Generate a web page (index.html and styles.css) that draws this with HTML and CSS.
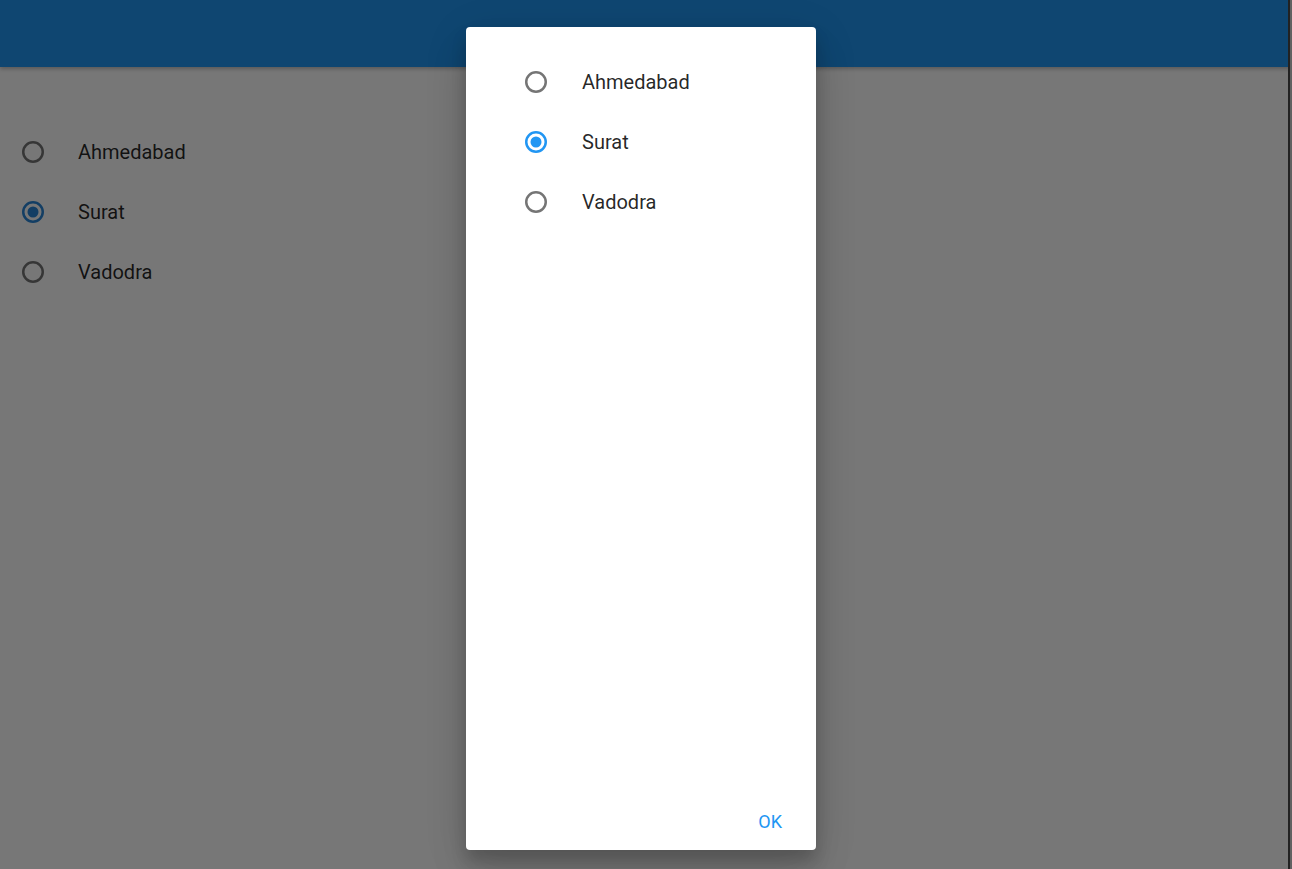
FILE: index.html
```html
<!DOCTYPE html>
<html>
<head>
<meta charset="utf-8">
<link rel="stylesheet" href="styles.css">
</head>
<body>
<div class="app">
  <header class="appbar"></header>
  <main class="list">
    <div class="row">
      <svg class="radio" viewBox="0 0 24 24"><circle cx="12" cy="12" r="9.75" fill="none" stroke="#757575" stroke-width="2.5"/></svg>
      <span class="label">Ahmedabad</span>
    </div>
    <div class="row">
      <svg class="radio" viewBox="0 0 24 24"><circle cx="12" cy="12" r="9.75" fill="none" stroke="#2a86d6" stroke-width="2.5"/><circle cx="12" cy="12" r="5.5" fill="#2a86d6"/></svg>
      <span class="label">Surat</span>
    </div>
    <div class="row">
      <svg class="radio" viewBox="0 0 24 24"><circle cx="12" cy="12" r="9.75" fill="none" stroke="#757575" stroke-width="2.5"/></svg>
      <span class="label">Vadodra</span>
    </div>
  </main>
  <div class="edge"></div>
  <div class="scrim"></div>
  <div class="dialog">
    <div class="dialog-list">
      <div class="drow">
        <svg class="radio" viewBox="0 0 24 24"><circle cx="12" cy="12" r="9.75" fill="none" stroke="#757575" stroke-width="2.5"/></svg>
        <span class="label">Ahmedabad</span>
      </div>
      <div class="drow">
        <svg class="radio" viewBox="0 0 24 24"><circle cx="12" cy="12" r="9.75" fill="none" stroke="#2196f3" stroke-width="2.5"/><circle cx="12" cy="12" r="5.5" fill="#2196f3"/></svg>
        <span class="label">Surat</span>
      </div>
      <div class="drow">
        <svg class="radio" viewBox="0 0 24 24"><circle cx="12" cy="12" r="9.75" fill="none" stroke="#757575" stroke-width="2.5"/></svg>
        <span class="label">Vadodra</span>
      </div>
    </div>
    <div class="actions">
      <button class="btn">OK</button>
    </div>
  </div>
</div>
</body>
</html>
```

FILE: styles.css
```css
html, body {
  margin: 0;
  padding: 0;
}
body {
  width: 1292px;
  height: 869px;
  overflow: hidden;
  background: #ffffff;
  font-family: Roboto, "Liberation Sans", sans-serif;
}
.app {
  position: relative;
  width: 1292px;
  height: 869px;
  background: #ffffff;
}
.appbar {
  height: 67px;
  background: #2196f3;
  box-shadow: 0 2px 4px rgba(0,0,0,0.25);
}
.list {
  padding-top: 55px;
  padding-left: 21px;
}
.row {
  height: 60px;
  display: flex;
  align-items: center;
  gap: 33px;
}
.radio {
  width: 24px;
  height: 24px;
  flex: none;
}
.label {
  font-size: 20px;
  color: rgba(0,0,0,0.85);
}
.edge {
  position: absolute;
  top: 0;
  right: 0;
  width: 4px;
  height: 869px;
  border-left: 2px solid #4a4a4a;
  box-sizing: border-box;
  background: #cfcfcf;
}
.scrim {
  position: absolute;
  inset: 0;
  background: rgba(0,0,0,0.535);
}
.dialog {
  position: absolute;
  left: 466px;
  top: 27px;
  width: 350px;
  height: 823px;
  background: #ffffff;
  border-radius: 4px;
  box-shadow: 0 11px 15px rgba(0,0,0,0.16), 0 24px 38px rgba(0,0,0,0.1), 0 9px 46px rgba(0,0,0,0.1);
  display: flex;
  flex-direction: column;
}
.dialog-list {
  flex: 1;
  padding-top: 25px;
  padding-left: 58px;
}
.drow {
  height: 60px;
  display: flex;
  align-items: center;
  gap: 34px;
}
.actions {
  display: flex;
  justify-content: flex-end;
  padding: 0 26px 10px 0;
}
.btn {
  border: none;
  background: transparent;
  padding: 8px;
  font-family: Roboto, "Liberation Sans", sans-serif;
  font-size: 18px;
  line-height: 20px;
  color: #2196f3;
}
```
